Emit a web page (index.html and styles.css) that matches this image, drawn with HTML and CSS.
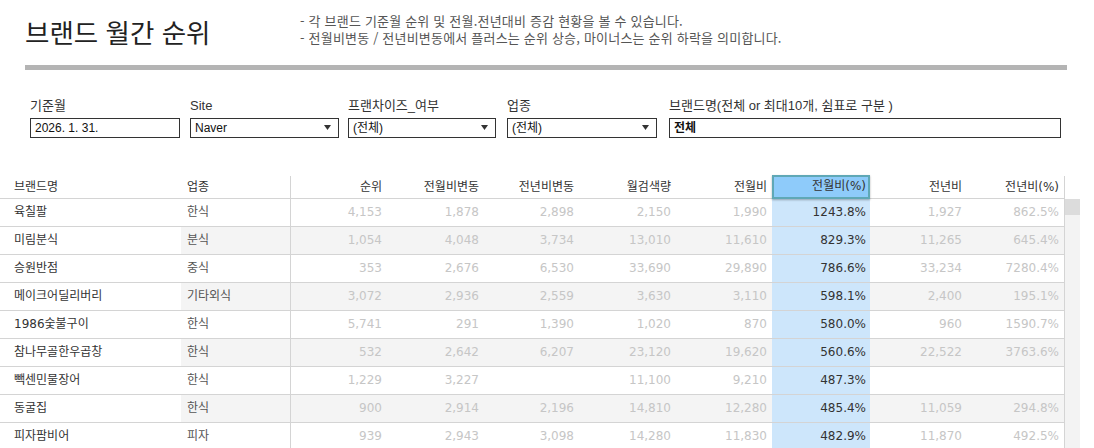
FILE: index.html
```html
<!DOCTYPE html>
<html lang="ko">
<head>
<meta charset="utf-8">
<title>브랜드 월간 순위</title>
<link rel="stylesheet" href="styles.css">
</head>
<body>
<div class="page">
  <header class="top">
    <h1 class="title">브랜드 월간 순위</h1>
    <div class="desc">
      <p>- 각 브랜드 기준월 순위 및 전월.전년대비 증감 현황을 볼 수 있습니다.</p>
      <p>- 전월비변동 / 전년비변동에서 플러스는 순위 상승, 마이너스는 순위 하락을 의미합니다.</p>
    </div>
  </header>
  <div class="rule"></div>

  <div class="filters">
    <div class="filter f1">
      <div class="label">기준월</div>
      <div class="box">2026. 1. 31.</div>
    </div>
    <div class="filter f2">
      <div class="label">Site</div>
      <div class="box select"><span>Naver</span><svg class="caret" width="7" height="5" viewBox="0 0 7 5"><polygon points="0,0 7,0 3.5,5" fill="#333"/></svg></div>
    </div>
    <div class="filter f3">
      <div class="label">프랜차이즈_여부</div>
      <div class="box select"><span>(전체)</span><svg class="caret" width="7" height="5" viewBox="0 0 7 5"><polygon points="0,0 7,0 3.5,5" fill="#333"/></svg></div>
    </div>
    <div class="filter f4">
      <div class="label">업종</div>
      <div class="box select"><span>(전체)</span><svg class="caret" width="7" height="5" viewBox="0 0 7 5"><polygon points="0,0 7,0 3.5,5" fill="#333"/></svg></div>
    </div>
    <div class="filter f5">
      <div class="label">브랜드명(전체 or 최대10개, 쉼표로 구분 )</div>
      <div class="box bold">전체</div>
    </div>
  </div>

  <div class="table-wrap">
    <div class="table">
      <div class="row head">
        <div class="c brand">브랜드명</div>
        <div class="c cat">업종</div>
        <div class="c num sep">순위</div>
        <div class="c num">전월비변동</div>
        <div class="c num">전년비변동</div>
        <div class="c num">월검색량</div>
        <div class="c num">전월비</div>
        <div class="c num hlhead">전월비(%)</div>
        <div class="c num">전년비</div>
        <div class="c num">전년비(%)</div>
      </div>
      <div class="row">
        <div class="c brand">육칠팔</div><div class="c cat">한식</div>
        <div class="c num sep">4,153</div><div class="c num">1,878</div><div class="c num">2,898</div><div class="c num">2,150</div><div class="c num">1,990</div><div class="c num hl">1243.8%</div><div class="c num">1,927</div><div class="c num">862.5%</div>
      </div>
      <div class="row alt">
        <div class="c brand">미림분식</div><div class="c cat">분식</div>
        <div class="c num sep">1,054</div><div class="c num">4,048</div><div class="c num">3,734</div><div class="c num">13,010</div><div class="c num">11,610</div><div class="c num hl">829.3%</div><div class="c num">11,265</div><div class="c num">645.4%</div>
      </div>
      <div class="row">
        <div class="c brand">승원반점</div><div class="c cat">중식</div>
        <div class="c num sep">353</div><div class="c num">2,676</div><div class="c num">6,530</div><div class="c num">33,690</div><div class="c num">29,890</div><div class="c num hl">786.6%</div><div class="c num">33,234</div><div class="c num">7280.4%</div>
      </div>
      <div class="row alt">
        <div class="c brand">메이크어딜리버리</div><div class="c cat">기타외식</div>
        <div class="c num sep">3,072</div><div class="c num">2,936</div><div class="c num">2,559</div><div class="c num">3,630</div><div class="c num">3,110</div><div class="c num hl">598.1%</div><div class="c num">2,400</div><div class="c num">195.1%</div>
      </div>
      <div class="row">
        <div class="c brand">1986숯불구이</div><div class="c cat">한식</div>
        <div class="c num sep">5,741</div><div class="c num">291</div><div class="c num">1,390</div><div class="c num">1,020</div><div class="c num">870</div><div class="c num hl">580.0%</div><div class="c num">960</div><div class="c num">1590.7%</div>
      </div>
      <div class="row alt">
        <div class="c brand">참나무골한우곱창</div><div class="c cat">한식</div>
        <div class="c num sep">532</div><div class="c num">2,642</div><div class="c num">6,207</div><div class="c num">23,120</div><div class="c num">19,620</div><div class="c num hl">560.6%</div><div class="c num">22,522</div><div class="c num">3763.6%</div>
      </div>
      <div class="row">
        <div class="c brand">빽센민물장어</div><div class="c cat">한식</div>
        <div class="c num sep">1,229</div><div class="c num">3,227</div><div class="c num"></div><div class="c num">11,100</div><div class="c num">9,210</div><div class="c num hl">487.3%</div><div class="c num"></div><div class="c num"></div>
      </div>
      <div class="row alt">
        <div class="c brand">동굴집</div><div class="c cat">한식</div>
        <div class="c num sep">900</div><div class="c num">2,914</div><div class="c num">2,196</div><div class="c num">14,810</div><div class="c num">12,280</div><div class="c num hl">485.4%</div><div class="c num">11,059</div><div class="c num">294.8%</div>
      </div>
      <div class="row">
        <div class="c brand">피자팜비어</div><div class="c cat">피자</div>
        <div class="c num sep">939</div><div class="c num">2,943</div><div class="c num">3,098</div><div class="c num">14,280</div><div class="c num">11,830</div><div class="c num hl">482.9%</div><div class="c num">11,870</div><div class="c num">492.5%</div>
      </div>
    </div>
    <div class="scroll"><div class="thumb"></div></div>
  </div>
</div>
</body>
</html>
```

FILE: styles.css
```css
* { box-sizing: border-box; }

html, body {
  margin: 0;
  padding: 0;
  background: #fff;
  overflow: hidden;
}

body {
  font-family: "Noto Sans CJK KR", "Noto Sans", sans-serif;
  color: #333;
}

.page {
  width: 1094px;
  height: 448px;
  overflow: hidden;
}

/* header */
.top {
  height: 65px;
  padding: 12px 0 0 25px;
  display: grid;
  grid-template-columns: 275px 1fr;
}

.title {
  margin: 4px 0 0 0;
  font-size: 26.5px;
  line-height: 32px;
  font-weight: 400;
  color: #222;
}

.desc p {
  margin: 0;
  font-size: 13px;
  line-height: 17px;
  color: #555;
  letter-spacing: 0.2px;
}

.rule {
  margin-left: 25px;
  width: 1042px;
  height: 5px;
  background: #b4b4b4;
}

/* filters */
.filters {
  padding: 28px 0 0 30px;
  display: flex;
}

.f1 { width: 150px; margin-right: 10px; }
.f2 { width: 149px; margin-right: 9px; }
.f3 { width: 148px; margin-right: 11px; }
.f4 { width: 150px; margin-right: 12px; }
.f5 { width: 392px; }

.label {
  font-family: "Liberation Sans", "Noto Sans CJK KR", sans-serif;
  font-size: 13px;
  line-height: 16px;
  height: 16px;
  color: #333;
  margin-bottom: 4px;
  white-space: nowrap;
}

.box {
  height: 20px;
  border: 1px solid #333;
  font-family: "Liberation Sans", "Noto Sans CJK KR", sans-serif;
  font-size: 12px;
  line-height: 18px;
  padding: 0 4px;
  color: #111;
  background: #fff;
}

.box.bold { font-weight: 700; }

.select {
  display: flex;
  align-items: center;
  justify-content: space-between;
  padding-right: 7px;
}

.caret { display: block; margin-top: -2px; }

/* table */
.table-wrap {
  margin-top: 38px;
  display: flex;
  align-items: flex-start;
}

.table {
  width: 1065px;
  border-right: 1px solid #d4d4d4;
  font-family: "DejaVu Sans", "Noto Sans CJK KR", sans-serif;
  font-size: 12px;
}

.row {
  display: grid;
  grid-template-columns: 181px 109px 97px 97px 95px 97px 96px 98px 97px 97px;
  height: 28px;
  border-bottom: 1px solid #d4d4d4;
}

.row.head {
  height: 23px;
}

.c {
  line-height: 27px;
  white-space: nowrap;
  overflow: hidden;
}

.head .c {
  line-height: 22px;
  color: #333;
}

.brand {
  padding-left: 14px;
  color: #333;
}

.cat {
  padding-left: 6px;
  color: #555;
}

.num {
  text-align: right;
  padding-right: 5px;
  color: #c6c6c6;
}

.sep { border-left: 1px solid #d4d4d4; }

.row.alt .c:not(.brand) { background: #f4f4f4; }

.row .c.hl,
.row.alt .c.hl:not(.brand) {
  background: #cde6fb;
  color: #333;
  padding-right: 4px;
}

.head .hlhead {
  background: #8ecbfa;
  border: 2px solid #5fa8b6;
  box-shadow: 0 1px 2px rgba(0, 0, 0, 0.3);
  line-height: 18px;
  padding-right: 2px;
  margin-top: -1px;
  height: 24px;
  position: relative;
}

.scroll {
  margin-top: 23px;
  width: 15px;
  height: 260px;
  background: #f3f3f3;
}

.thumb {
  height: 16px;
  background: #dcdcdc;
}
```
